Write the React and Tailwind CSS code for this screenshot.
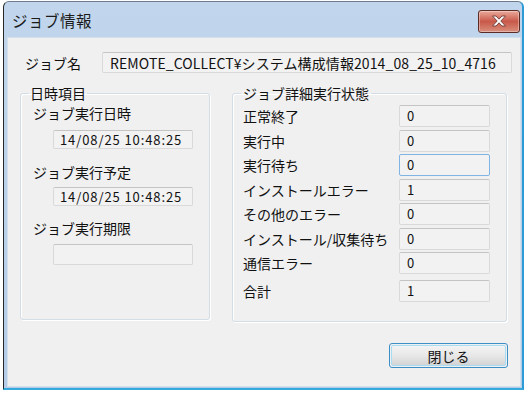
import React from "react";

const FONT = { fontFamily: "'Noto Sans CJK JP', 'Liberation Sans', sans-serif" };

function Field({ children, className = "", focus = false }) {
  return (
    <div
      className={
        "flex items-center rounded-[2px] border bg-[#f2f2f2] text-[13px] leading-[18px] text-[#111] " +
        (focus
          ? "border-[#7fb4e4] "
          : "border-[#d9d9d9] border-t-[#c4c4c4] ") +
        className
      }
    >
      {children}
    </div>
  );
}

const rows = [
  ["正常終了", "0"],
  ["実行中", "0"],
  ["実行待ち", "0", true],
  ["インストールエラー", "1"],
  ["その他のエラー", "0"],
  ["インストール/収集待ち", "0"],
  ["通信エラー", "0"],
];

export default function App() {
  return (
    <div className="w-[529px] h-[393px] bg-white overflow-hidden" style={FONT}>
      <div className="ml-[3px] mt-[1px] w-[521px] h-[389px] flex flex-col rounded-t-[6px] border-l border-t border-l-[#262626] border-t-[#6d7c8c] border-r-2 border-r-[#2f9bd6] border-b-2 border-b-[#35a9dc] bg-gradient-to-b from-[#c1d6ec] to-[#b3cce7]">
        {/* title bar */}
        <div className="h-[35px] flex items-center shrink-0">
          <div className="ml-[8px] text-[15.5px] leading-[20px] text-[#1b1b1b] tracking-[0.5px]">ジョブ情報</div>
          <div className="ml-auto mr-[2px] mt-[3px] w-[42px] h-[23px] rounded-[3px] border border-[#5b2c25] bg-gradient-to-b from-[#e9a99b] via-[#c8584a] to-[#d98e7c] flex items-center justify-center shadow-[inset_0_0_0_1px_rgba(255,255,255,0.35)]">
            <svg width="16" height="12" viewBox="0 0 16 12">
              <path
                d="M1.5 1 H5 L8 4.2 L11 1 H14.5 L9.8 6 L14.5 11 H11 L8 7.8 L5 11 H1.5 L6.2 6 Z"
                fill="#ffffff"
                stroke="#6b3a35"
                strokeWidth="0.9"
                strokeLinejoin="round"
              />
            </svg>
          </div>
        </div>
        {/* client */}
        <div className="flex-1 ml-[3px] mr-[1px] mb-[1px] bg-[#f0f0f0] border border-[#d4e0ec] pl-[12px] pr-[8px] pt-[14px] flex flex-col">
          {/* name row */}
          <div className="flex items-center h-[21px]">
            <div className="w-[82px] pl-[5px] text-[14px] leading-[20px] text-[#111]">ジョブ名</div>
            <Field className="flex-1 h-[21px] pl-[7px]">
              <span className="text-[14px] tracking-[0.1px]">REMOTE_COLLECT¥システム構成情報2014_08_25_10_4716</span>
            </Field>
          </div>
          {/* groups */}
          <div className="flex items-start gap-[22px] mt-[10px]">
            <fieldset className="w-[190px] h-[237px] rounded-[3px] border border-[#d3dde6] shadow-[inset_1px_1px_0_#ffffff,1px_1px_0_#ffffff] pl-[8px] pr-0 pb-0">
              <legend className="px-[1px] text-[14px] leading-[20px] text-[#111]">日時項目</legend>
              <div className="pl-[4px] flex flex-col text-[14px] text-[#111]">
                <div className="h-[20px] leading-[20px]">ジョブ実行日時</div>
                <Field className="mt-[7px] ml-[20px] w-[140px] h-[19px] pl-[6px]">
                  <span className="tracking-[0.9px]">14/08/25 10:48:25</span>
                </Field>
                <div className="mt-[13px] h-[20px] leading-[20px]">ジョブ実行予定</div>
                <Field className="mt-[5px] ml-[20px] w-[140px] h-[19px] pl-[6px]">
                  <span className="tracking-[0.9px]">14/08/25 10:48:25</span>
                </Field>
                <div className="mt-[12px] h-[20px] leading-[20px]">ジョブ実行期限</div>
                <Field className="mt-[6px] ml-[20px] w-[140px] h-[21px]" />
              </div>
            </fieldset>
            <fieldset className="w-[275px] h-[239px] rounded-[3px] border border-[#d3dde6] shadow-[inset_1px_1px_0_#ffffff,1px_1px_0_#ffffff] pl-[8px] pr-0 pb-0">
              <legend className="px-[2px] text-[14px] leading-[20px] text-[#111]">ジョブ詳細実行状態</legend>
              <div className="mt-[2px] flex flex-col gap-[2.5px] text-[14px] text-[#111]">
                {rows.map(([label, val, focus]) => (
                  <div key={label} className="flex items-center h-[22px]">
                    <div className="w-[158px] pl-[2px] leading-[20px]">{label}</div>
                    <Field focus={focus} className="w-[91px] h-[22px] pl-[7px]">
                      {val}
                    </Field>
                  </div>
                ))}
                <div className="flex items-center h-[22px] mt-[3.5px]">
                  <div className="w-[158px] pl-[2px] leading-[20px]">合計</div>
                  <Field className="w-[91px] h-[22px] pl-[7px]">1</Field>
                </div>
              </div>
            </fieldset>
          </div>
          {/* button */}
          <div className="flex mt-[21px]">
            <div className="ml-auto mr-[4px] w-[119px] h-[25px] rounded-[3px] border border-[#3d8ec4] p-[1px]">
              <div className="w-full h-full rounded-[2px] border border-[#a7dcf5] bg-gradient-to-b from-[#f3f3f3] via-[#e8e8e8] to-[#d4d4d4] flex items-center justify-center text-[14px] leading-[18px] text-[#111]">
                閉じる
              </div>
            </div>
          </div>
        </div>
      </div>
    </div>
  );
}
